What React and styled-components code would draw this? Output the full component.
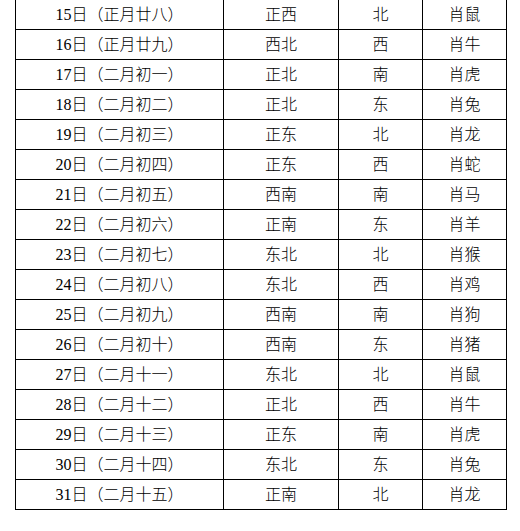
import React from 'react';
import styled, { createGlobalStyle } from 'styled-components';

const GlobalStyle = createGlobalStyle`
  html, body {
    margin: 0;
    padding: 0;
    background: #fff;
  }
`;

const Page = styled.div`
  padding-left: 15px;
  margin-top: -1px;
  font-family: "Liberation Serif", "Noto Sans CJK SC", serif;
  color: #000;
`;

const Table = styled.table`
  border-collapse: collapse;
  table-layout: fixed;
  width: 491px;
`;

const Col = styled.col`
  width: ${(p) => p.$w}px;
`;

const Row = styled.tr`
  height: 30px;
`;

const Cell = styled.td`
  border: 1px solid #000;
  padding: 0;
  text-align: center;
  vertical-align: middle;
  font-size: 16px;
  font-weight: 300;
  line-height: 20px;
  white-space: nowrap;
`;

const widths = [208, 115, 84, 84];

const rows = [
  ['15日（正月廿八）', '正西', '北', '肖鼠'],
  ['16日（正月廿九）', '西北', '西', '肖牛'],
  ['17日（二月初一）', '正北', '南', '肖虎'],
  ['18日（二月初二）', '正北', '东', '肖兔'],
  ['19日（二月初三）', '正东', '北', '肖龙'],
  ['20日（二月初四）', '正东', '西', '肖蛇'],
  ['21日（二月初五）', '西南', '南', '肖马'],
  ['22日（二月初六）', '正南', '东', '肖羊'],
  ['23日（二月初七）', '东北', '北', '肖猴'],
  ['24日（二月初八）', '东北', '西', '肖鸡'],
  ['25日（二月初九）', '西南', '南', '肖狗'],
  ['26日（二月初十）', '西南', '东', '肖猪'],
  ['27日（二月十一）', '东北', '北', '肖鼠'],
  ['28日（二月十二）', '正北', '西', '肖牛'],
  ['29日（二月十三）', '正东', '南', '肖虎'],
  ['30日（二月十四）', '东北', '东', '肖兔'],
  ['31日（二月十五）', '正南', '北', '肖龙'],
];

export default function App() {
  return (
    <Page>
      <GlobalStyle />
      <Table>
        <colgroup>
          {widths.map((w, i) => (
            <Col key={i} $w={w} />
          ))}
        </colgroup>
        <tbody>
          {rows.map((r) => (
            <Row key={r[0]}>
              {r.map((c, i) => (
                <Cell key={i}>{c}</Cell>
              ))}
            </Row>
          ))}
        </tbody>
      </Table>
    </Page>
  );
}
